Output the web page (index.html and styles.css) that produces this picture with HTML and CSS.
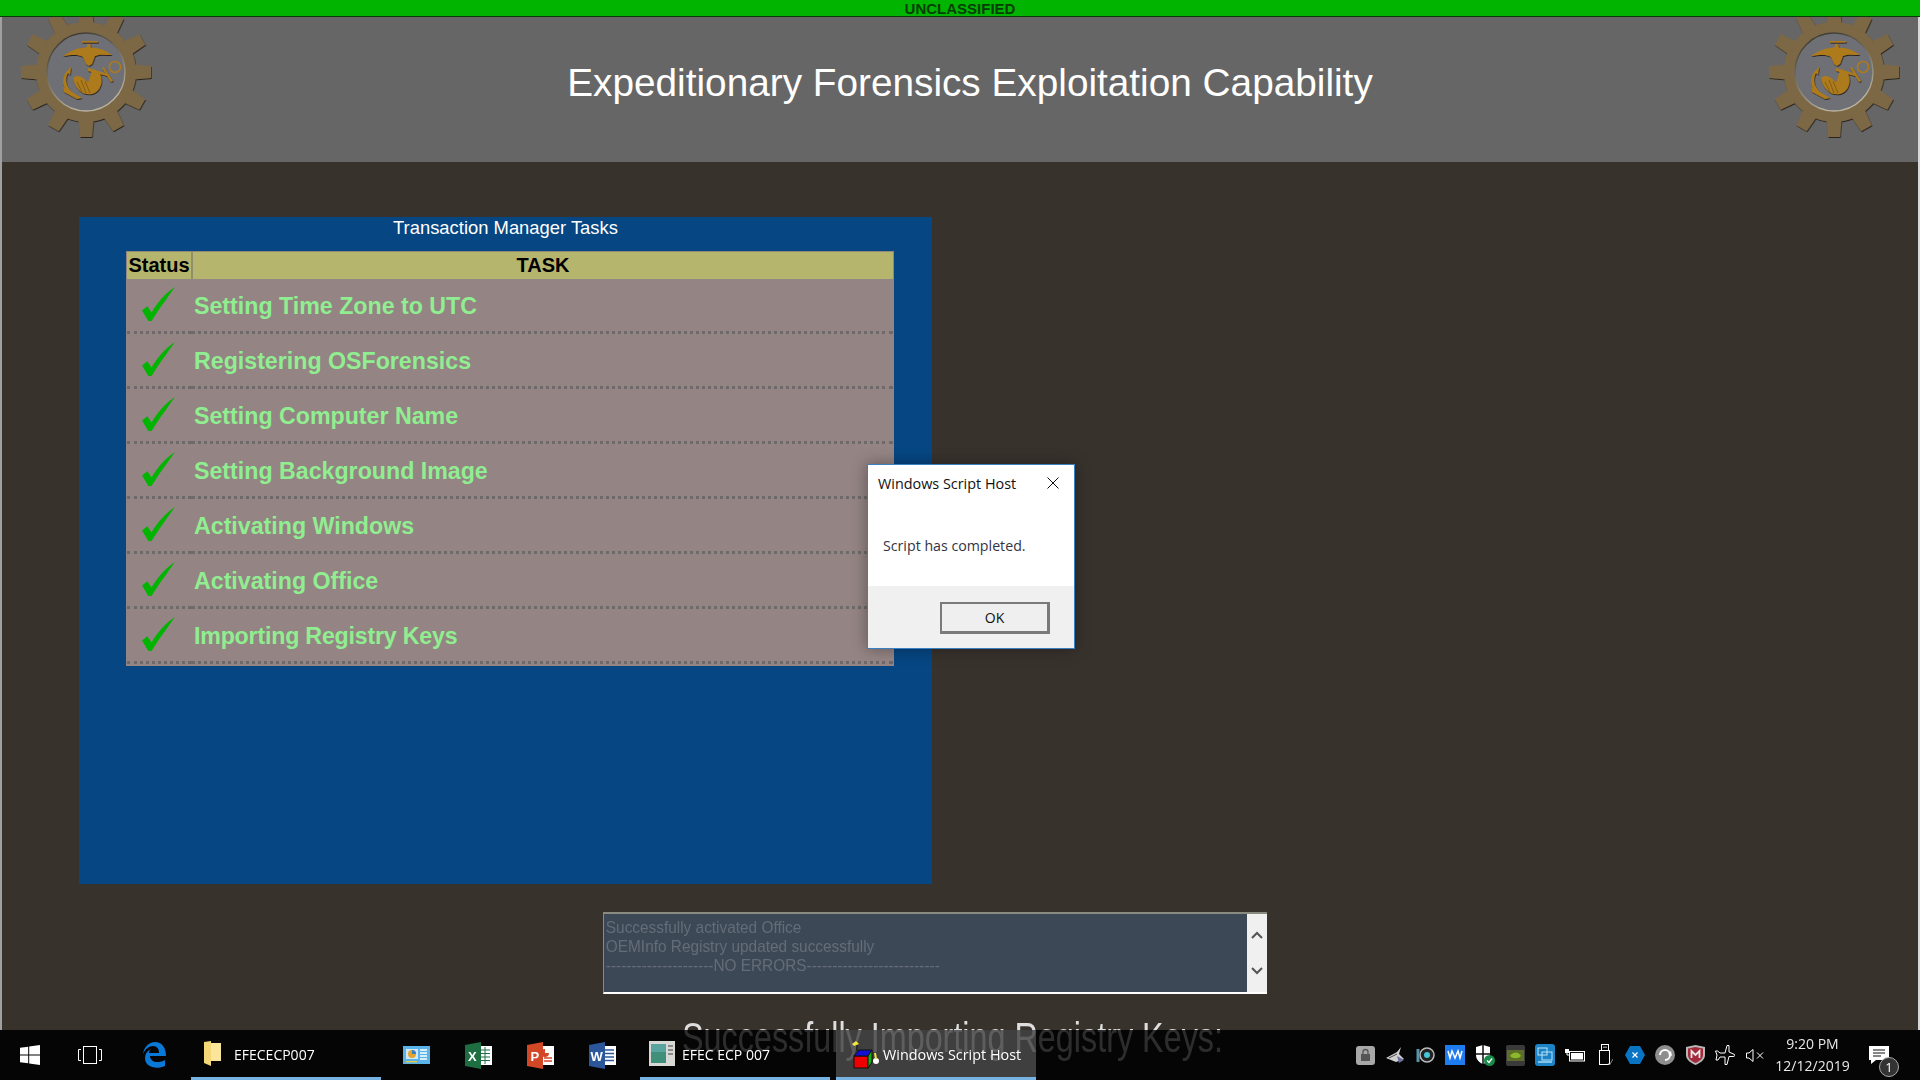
FILE: index.html
```html
<!DOCTYPE html>
<html>
<head>
<meta name="viewport" content="width=device-width, initial-scale=1.0">
<title>Expeditionary Forensics Exploitation Capability</title>
<link rel="stylesheet" href="styles.css">
</head>
<body>

<svg class="defs" width="0" height="0">
  <defs>
    <polygon id="tooth" points="-7.500,-48 -6,-65 6,-65 7.500,-48"/>
    <linearGradient id="ringedge" x1="0" y1="0" x2="0.4" y2="1">
      <stop offset="0" stop-color="#2e2a22"/>
      <stop offset="1" stop-color="#b8b2a0"/>
    </linearGradient>
    <filter id="bevel" x="-10%" y="-10%" width="120%" height="120%">
      <feDropShadow dx="0.6" dy="1" stdDeviation="0.4" flood-color="#26221a"/>
    </filter>
    <g id="gear">
      <g fill="#7c6744" filter="url(#bevel)">
        <circle cx="0" cy="0" r="44.500" fill="none" stroke="#7c6744" stroke-width="11"/>
        <use href="#tooth"/>
        <use href="#tooth" transform="rotate(30)"/>
        <use href="#tooth" transform="rotate(60)"/>
        <use href="#tooth" transform="rotate(90)"/>
        <use href="#tooth" transform="rotate(120)"/>
        <use href="#tooth" transform="rotate(150)"/>
        <use href="#tooth" transform="rotate(180)"/>
        <use href="#tooth" transform="rotate(210)"/>
        <use href="#tooth" transform="rotate(240)"/>
        <use href="#tooth" transform="rotate(270)"/>
        <use href="#tooth" transform="rotate(300)"/>
        <use href="#tooth" transform="rotate(330)"/>
      </g>
      <circle cx="0" cy="0" r="39" fill="#6e7076" stroke="url(#ringedge)" stroke-width="1.400"/>
      <g fill="#ad7a1c" filter="url(#bevel)">
        <!-- eagle -->
        <rect x="-4" y="-31" width="16" height="1.600"/>
        <path d="M-23,-16 C-16,-21 -9,-24 -3,-24 L1,-25 L1,-28 L4,-28 L5,-24 C11,-25 19,-22 26,-17 C20,-17 14,-18 9,-16 L6,-8 L3,-6 L0,-8 L-3,-15 C-8,-18 -15,-17 -23,-16 Z"/>
        <!-- globe -->
        <path d="M-13,6 C-8,1 -2,6 2,10 C5,6 4,-1 8,-3 L14,2 C18,10 14,20 6,22 C-3,24 -11,17 -13,6 Z"/>
        <!-- anchor -->
        <path d="M2,-4 L22,2 L21,4 L2,-1 Z"/>
        <path d="M16,-4 L18,-5 L27,9 L25,10 Z"/>
        <path d="M-22,2 L-15,-5 L-16,3 L-18,1 C-23,10 -18,20 -6,25 L-8,26 C-21,22 -27,11 -20,0 Z"/>
        <path d="M-23,15 L-4,26 L-9,27 L-22,20 Z"/>
      </g>
      <path d="M-9,10 L-4,20 M-5,8 L0,21 M-1,9 L4,21" stroke="#7a5510" stroke-width="0.800" fill="none"/>
      <circle cx="29" cy="-5" r="5.500" fill="none" stroke="#ad7a1c" stroke-width="1.500"/>
    </g>
    <path id="check" d="M0,22 L5,18 L9,24 C14,15 22,6 31,0 C24,10 15,22 9,32 L6,32 Z"/>
  </defs>
</svg>

<div class="banner">UNCLASSIFIED</div>

<div class="app">
  <header class="header">
    <svg class="gear" viewBox="-70 -55 140 125"><use href="#gear"/></svg>
    <h1 class="title">Expeditionary Forensics Exploitation Capability</h1>
    <svg class="gear" viewBox="-70 -55 140 125"><use href="#gear"/></svg>
  </header>

  <main class="main">
    <section class="panel">
      <div class="panel-title">Transaction Manager Tasks</div>
      <table class="tasks">
        <thead>
          <tr><th class="col-status">Status</th><th>TASK</th></tr>
        </thead>
        <tbody>
          <tr><td class="col-status"><svg class="tick" viewBox="0 0 32 32"><use href="#check"/></svg></td><td>Setting Time Zone to UTC</td></tr>
          <tr><td class="col-status"><svg class="tick" viewBox="0 0 32 32"><use href="#check"/></svg></td><td>Registering OSForensics</td></tr>
          <tr><td class="col-status"><svg class="tick" viewBox="0 0 32 32"><use href="#check"/></svg></td><td>Setting Computer Name</td></tr>
          <tr><td class="col-status"><svg class="tick" viewBox="0 0 32 32"><use href="#check"/></svg></td><td>Setting Background Image</td></tr>
          <tr><td class="col-status"><svg class="tick" viewBox="0 0 32 32"><use href="#check"/></svg></td><td>Activating Windows</td></tr>
          <tr><td class="col-status"><svg class="tick" viewBox="0 0 32 32"><use href="#check"/></svg></td><td>Activating Office</td></tr>
          <tr><td class="col-status"><svg class="tick" viewBox="0 0 32 32"><use href="#check"/></svg></td><td class="task-narrow">Importing Registry Keys</td></tr>
        </tbody>
      </table>
    </section>

    <div class="log">
      <div class="log-text">Successfully activated Office<br>OEMInfo Registry updated successfully<br>---------------------NO ERRORS--------------------------</div>
      <div class="log-scroll">
        <svg width="12" height="8" viewBox="0 0 12 8"><path d="M1,7 L6,2 L11,7" fill="none" stroke="#555" stroke-width="2"/></svg>
        <svg width="12" height="8" viewBox="0 0 12 8"><path d="M1,1 L6,6 L11,1" fill="none" stroke="#555" stroke-width="2"/></svg>
      </div>
    </div>

    <div class="status-line">Successfully Importing Registry Keys:</div>
  </main>
</div>

<div class="dialog">
  <div class="dialog-head">
    <span>Windows Script Host</span>
    <svg width="12" height="12" viewBox="0 0 12 12"><path d="M0.5,0.5 L11.5,11.5 M11.5,0.5 L0.5,11.5" stroke="#111" stroke-width="1"/></svg>
  </div>
  <div class="dialog-body">Script has completed.</div>
  <div class="dialog-foot"><button class="dialog-btn" type="button">OK</button></div>
</div>

<footer class="taskbar">
  <div class="tb-icon">
    <svg width="20" height="20" viewBox="0 0 20 20" fill="#fff"><path d="M0,2.8 L8.2,1.7 V9.4 H0 Z M9.2,1.5 L20,0 V9.4 H9.2 Z M0,10.4 H8.2 V18.3 L0,17.2 Z M9.2,10.4 H20 V20 L9.2,18.5 Z"/></svg>
  </div>
  <div class="tb-icon">
    <svg width="24" height="18" viewBox="0 0 24 18" fill="none" stroke="#fff"><rect x="5.5" y="0.5" width="13" height="17"/><path d="M3,3.5 H0.5 V14.5 H3 M21,3.5 H23.5 V14.5 H21"/></svg>
  </div>
  <div class="tb-icon tb-edge">
    <svg width="24" height="26" viewBox="0 0 24 26"><path d="M1,12 C2,4 8,0 13,0 C20,0 24,6 24,14 H8 C8,20 16,22 23,18 V24 C14,28 3,25 3,16 C3,12 5,9 9,7 C7,9 7,10 7,11 H17 C17,7 15,4 11,4 C7,4 3,7 1,12 Z" fill="#0a78d7"/></svg>
  </div>
  <div class="tb-task">
    <svg width="18" height="26" viewBox="0 0 18 26"><path d="M0,1 L7,0 V2 H17 V20 H7 V25 L0,22 Z" fill="#f6d777"/><path d="M7,2 H17 V20 H7 Z" fill="#fbe59a"/></svg>
    <span class="tb-label">EFECECP007</span>
  </div>
  <div class="tb-pinned">
    <svg width="27" height="18" viewBox="0 0 27 18"><rect width="27" height="18" fill="#5ab4ea"/><rect x="3" y="3" width="12" height="10" fill="#cfe9f8"/><circle cx="9" cy="8" r="4" fill="#e6a42e"/><path d="M9,8 V4 A4,4 0 0 1 13,8 Z" fill="#3b7fc0"/><path d="M17,4 H24 M17,7 H24 M17,10 H24 M17,13 H24" stroke="#fff" stroke-width="1.4"/><rect x="3" y="15" width="11" height="1.4" fill="#e6c84a"/></svg>
  </div>
  <div class="tb-pinned">
    <svg width="27" height="27" viewBox="0 0 27 27"><rect x="13" y="4" width="14" height="19" fill="#fff"/><path d="M16,8 H25 M16,11.500 H25 M16,15 H25 M16,18.500 H25 M20,5 V22" stroke="#1d6f42" stroke-width="1"/><path d="M0,3 L16,0 V27 L0,24 Z" fill="#1d6f42"/><text class="tb-letter" x="3" y="19">X</text></svg>
  </div>
  <div class="tb-pinned">
    <svg width="27" height="27" viewBox="0 0 27 27"><rect x="13" y="4" width="14" height="19" fill="#fff"/><path d="M18,7 A4,4 0 1 0 22,11 H18 Z" fill="#d24726"/><path d="M17,16 H25 M17,19 H25" stroke="#d24726" stroke-width="1.400"/><path d="M0,3 L16,0 V27 L0,24 Z" fill="#d24726"/><text class="tb-letter" x="3.500" y="19">P</text></svg>
  </div>
  <div class="tb-pinned">
    <svg width="27" height="27" viewBox="0 0 27 27"><rect x="13" y="4" width="14" height="19" fill="#fff"/><path d="M16,8 H25 M16,11.500 H25 M16,15 H25 M16,18.500 H25" stroke="#2b579a" stroke-width="1.400"/><path d="M0,3 L16,0 V27 L0,24 Z" fill="#2b579a"/><text class="tb-letter" x="1.500" y="19">W</text></svg>
  </div>
  <div class="tb-task tb-task-ecp">
    <svg width="26" height="25" viewBox="0 0 26 25"><rect width="26" height="25" fill="#d8d8d4"/><rect x="2" y="3" width="15" height="19" fill="#3f8f7a"/><rect x="2" y="3" width="15" height="8" fill="#5aa4a0"/><path d="M19,5 H24 M19,9 H24 M19,13 H24" stroke="#8a8a8a" stroke-width="2"/></svg>
    <span class="tb-label">EFEC ECP 007</span>
  </div>
  <div class="tb-task tb-task-active">
    <svg width="28" height="30" viewBox="0 0 28 30"><path d="M1,5 L3,7 L8,5 L5,2 Z" fill="#f5e63c"/><path d="M6,6 V12" stroke="#111"/><rect x="3" y="17" width="14" height="12" fill="#ee0000" stroke="#111"/><path d="M3,17 L8,11 H21 L17,17 Z" fill="#1010d0" stroke="#111"/><path d="M17,17 L21,11 V23 L17,29 Z" fill="#12b012" stroke="#111"/><circle cx="25" cy="22" r="3" fill="#fff"/><path d="M24,14 L25,20" stroke="#f5e63c" stroke-width="2"/></svg>
    <span class="tb-label">Windows Script Host</span>
  </div>

  <div class="tray">
    <div class="tray-icon"><svg width="19" height="19" viewBox="0 0 19 19"><rect width="19" height="19" rx="3" fill="#a8a8a8"/><rect x="5" y="8" width="9" height="7" fill="#555"/><path d="M7,8 V6 A2.500,2.500 0 0 1 12,6 V8" fill="none" stroke="#555" stroke-width="1.300"/></svg></div>
    <div class="tray-icon"><svg width="19" height="17" viewBox="0 0 19 17"><path d="M0,11 L11,5 L15,0 L13,7 L18,12 L10,15 Z" fill="#d0d0d0"/><path d="M11,9 L18,13 L13,16 Z" fill="#6a6f9e"/><path d="M3,11 L11,7" stroke="#444"/></svg></div>
    <div class="tray-icon"><svg width="19" height="19" viewBox="0 0 19 19"><circle cx="11" cy="9" r="7" fill="#222" stroke="#bbb" stroke-width="1.500"/><circle cx="11" cy="9" r="3" fill="#46c4d8"/><path d="M2,3 V16" stroke="#5b93a8" stroke-width="3"/></svg></div>
    <div class="tray-icon"><svg width="20" height="20" viewBox="0 0 20 20"><rect width="20" height="20" fill="#1e7cf0"/><path d="M3,6 L5,13 L7,6 L10,13 L13,6 L15,13 L17,6" fill="none" stroke="#fff" stroke-width="1.500"/></svg></div>
    <div class="tray-icon"><svg width="20" height="21" viewBox="0 0 20 21"><path d="M1,2 L8,0 L15,2 V10 C15,15 11,18 8,19 C5,18 1,15 1,10 Z" fill="#fff"/><path d="M8,0 V19 M1,9 H15" stroke="#111" stroke-width="1.500"/><circle cx="14.500" cy="15.500" r="5.500" fill="#1a8a4a"/><path d="M12,15.500 L14,17.500 L17,13.500" fill="none" stroke="#fff" stroke-width="1.300"/></svg></div>
    <div class="tray-icon"><svg width="19" height="21" viewBox="0 0 19 21"><rect width="19" height="21" rx="2" fill="#3a3a3a"/><rect x="1" y="5" width="17" height="11" fill="#5c6e28"/><path d="M4,11 C8,6 13,7 15,11 C12,14 7,14 4,11 Z" fill="#8cb82c"/></svg></div>
    <div class="tray-icon"><svg width="20" height="22" viewBox="0 0 20 22"><rect width="20" height="22" rx="3" fill="#1b83c6"/><rect x="3" y="4" width="9" height="7" fill="none" stroke="#bfe4f8"/><rect x="7" y="8" width="10" height="8" fill="none" stroke="#bfe4f8"/><rect x="3" y="17" width="14" height="2" fill="#7fc6ea"/></svg></div>
    <div class="tray-icon"><svg width="20" height="13" viewBox="0 0 20 13"><rect x="4.500" y="2.500" width="15" height="9.500" fill="#111" stroke="#fff"/><rect x="6" y="4" width="12" height="6.500" fill="#fff"/><rect x="0" y="0" width="4" height="4" fill="#fff"/><path d="M2,4 V6 H5" stroke="#fff" fill="none"/></svg></div>
    <div class="tray-icon"><svg width="15" height="22" viewBox="0 0 15 22" fill="none" stroke="#fff"><rect x="3.500" y="0.500" width="7" height="6"/><rect x="1.500" y="6.500" width="10" height="14"/><path d="M6,2.500 V4 M8,2.500 V4"/><path d="M10,19 L11.500,21 L15,15" stroke="#888"/></svg></div>
    <div class="tray-icon"><svg width="20" height="20" viewBox="0 0 20 20"><path d="M5,1 H15 L20,10 L15,19 H5 L0,10 Z" fill="#0a74c4"/><path d="M7.500,7.500 L12.500,12.500 M12.500,7.500 L7.500,12.500" stroke="#fff" stroke-width="1.200"/></svg></div>
    <div class="tray-icon"><svg width="20" height="20" viewBox="0 0 20 20"><circle cx="10" cy="10" r="10" fill="#8e8e8e"/><path d="M5,10 A5,5 0 1 1 10,15" fill="none" stroke="#fff" stroke-width="2"/><path d="M13,9 L17,11 L16,6 Z" fill="#fff"/></svg></div>
    <div class="tray-icon"><svg width="19" height="20" viewBox="0 0 19 20"><path d="M0,2 L9.500,0 L19,2 V10 C19,15 14,18 9.500,20 C5,18 0,15 0,10 Z" fill="#b8b8b8"/><path d="M2,3.500 L9.500,2 L17,3.500 V10 C17,14 13,16.500 9.500,18 C6,16.500 2,14 2,10 Z" fill="#a22a3a"/><path d="M5.500,13 V6 L9.500,10 L13.500,6 V13" fill="none" stroke="#e8e8e8" stroke-width="1.800"/></svg></div>
    <div class="tray-icon"><svg width="20" height="20" viewBox="0 0 20 20"><path d="M12,0.500 L14,0.500 L14,7 L19.500,9.500 C20,11 19.500,11.500 18,11.500 L14,11.500 L12,19.500 H10 L10,12 L5,12 L3,15 H1 L2,10 L0.500,6 H2.500 L5,8 L10,8 Z" fill="#080808" stroke="#fff" stroke-width="1"/></svg></div>
    <div class="tray-icon"><svg width="19" height="13" viewBox="0 0 19 13" fill="none" stroke="#fff"><path d="M0.500,4 H3 L7,0.500 V12.500 L3,9 H0.500 Z"/><path d="M11,3.500 L17,9.500 M17,3.500 L11,9.500"/></svg></div>
  </div>
  <div class="clock"><span>9:20 PM</span><span>12/12/2019</span></div>
  <div class="notify">
    <svg width="20" height="18" viewBox="0 0 20 18"><path d="M0,0 H20 V14 H7 L2,18 V14 H0 Z" fill="#fff"/><path d="M4,4 H16 M4,7 H16 M4,10 H12" stroke="#111"/></svg>
    <span class="notify-count">1</span>
  </div>
</footer>

</body>
</html>
```

FILE: styles.css
```css
html, body {
  margin: 0;
  height: 100%;
}

body {
  font-family: "Liberation Sans", Arial, sans-serif;
  background-color: #1a1a1a;
  height: 100vh;
  overflow: hidden;
}

.defs {
  position: absolute;
}

.banner {
  height: 16px;
  line-height: 17px;
  background-color: #00b400;
  border-bottom: 1px solid #0a3a0a;
  color: #063f06;
  font-size: 15px;
  font-weight: bold;
  text-align: center;
}

.app {
  height: 1013px;
  background-color: #38322d;
  border-left: 2px solid #a0a0a0;
  border-right: 2px solid #d8d8d8;
}

.header {
  display: flex;
  align-items: flex-start;
  justify-content: space-between;
  height: 145px;
  background-color: #666666;
  padding: 0 14px;
  box-sizing: border-box;
}

.gear {
  width: 140px;
  height: 125px;
  display: block;
}

.title {
  margin: 43px 0 0 20px;
  font-size: 38.75px;
  font-weight: normal;
  line-height: 46px;
  color: #ffffff;
}

.main {
  padding: 55px 0 0 77px;
}

.panel {
  width: 853px;
  height: 667px;
  background-color: #064682;
  box-sizing: border-box;
  padding: 0 38px 0 47px;
}

.panel-title {
  height: 34px;
  margin: 0 -38px 0 -47px;
  line-height: 22px;
  text-align: center;
  color: #ffffff;
  font-size: 18.4px;
}

.tasks {
  width: 768px;
  border-collapse: separate;
  border-spacing: 0;
  background-color: #948484;
  border: 1px solid #948484;
  border-top: 1px solid #8f8b77;
  border-bottom-width: 2px;
}

.tasks th {
  height: 27px;
  padding: 0;
  background-color: #b5b56e;
  color: #000000;
  font-size: 20px;
  font-weight: bold;
  border-left: 2px solid #8f8f68;
}

.tasks th.col-status {
  width: 64px;
  border-left: 0;
}

.tasks td {
  height: 55px;
  padding: 2px 0 0 3px;
  box-sizing: border-box;
  color: #90ee90;
  font-size: 23.2px;
  font-weight: bold;
  border-bottom: 3px dotted #6f6a6a;
}

.tasks td.col-status {
  padding: 0;
}

.tasks td.task-narrow {
  letter-spacing: -0.2px;
}

.tick {
  width: 34px;
  height: 34px;
  display: block;
  margin: -2px 0 0 15px;
  fill: #00b400;
}

.log {
  display: flex;
  width: 664px;
  height: 82px;
  margin: 28px 0 0 524px;
  background-color: #3d4856;
  border-top: 2px solid #8a8a80;
  border-left: 1px solid #8a8a80;
  border-bottom: 2px solid #ffffff;
  box-sizing: border-box;
}

.log-text {
  flex: 1;
  padding: 4px 0 0 2px;
  font-size: 17px;
  line-height: 19px;
  color: #646c78;
  white-space: nowrap;
  transform: scaleX(0.905);
  transform-origin: left top;
}

.log-scroll {
  width: 20px;
  background-color: #f0f0f0;
  display: flex;
  flex-direction: column;
  align-items: center;
  justify-content: center;
  gap: 28px;
}

.status-line {
  margin: 20px 0 0 603px;
  font-size: 42px;
  line-height: 48px;
  color: #dedede;
  white-space: nowrap;
  transform: scaleX(0.77);
  transform-origin: left top;
}

/* dialog sits over the page */
.dialog {
  position: absolute;
  left: 867px;
  top: 464px;
  width: 208px;
  height: 185px;
  background-color: #ffffff;
  border: 1px solid #3a80c0;
  box-sizing: border-box;
  box-shadow: 0 0 14px rgba(0, 0, 0, 0.35);
  display: flex;
  flex-direction: column;
  font-family: "Open Sans", sans-serif;
  color: #111111;
}

.dialog-head {
  display: flex;
  justify-content: space-between;
  align-items: center;
  height: 36px;
  padding: 0 15px 2px 10px;
  font-size: 14.4px;
}

.dialog-body {
  flex: 1;
  padding: 34px 0 0 15px;
  font-size: 14.2px;
  line-height: 18px;
  color: #333344;
}

.dialog-foot {
  height: 62px;
  background-color: #f0f0f0;
  padding: 16px 0 0 72px;
  box-sizing: border-box;
}

.dialog-btn {
  width: 110px;
  height: 32px;
  background-color: #efefef;
  border: 2px solid #7a7a7a;
  border-bottom-width: 3px;
  border-right-width: 3px;
  font-family: "Open Sans", sans-serif;
  font-size: 14px;
  color: #111111;
  padding: 0;
}

/* translucent, the line of text under it shows through */
.taskbar {
  position: fixed;
  left: 0;
  right: 0;
  bottom: 0;
  height: 50px;
  background-color: rgba(0, 0, 0, 0.8);
  display: flex;
  align-items: stretch;
  color: #ffffff;
  font-family: "Open Sans", sans-serif;
  font-size: 14px;
}

.tb-icon {
  width: 60px;
  display: flex;
  align-items: center;
  justify-content: center;
}

.tb-edge {
  margin-left: 4px;
}

.tb-task {
  width: 190px;
  margin-left: 7px;
  padding: 0 0 0 13px;
  box-sizing: border-box;
  display: flex;
  align-items: center;
  gap: 12px;
  border-bottom: 3px solid #76b2e2;
}

.tb-label {
  margin-top: 2px;
  white-space: nowrap;
}

.tb-pinned {
  width: 62px;
  display: flex;
  align-items: center;
  justify-content: center;
}

.tb-pinned:nth-of-type(5) {
  margin-left: 4px;
}

.tb-letter {
  font-family: "Liberation Sans", sans-serif;
  font-size: 13px;
  font-weight: bold;
  fill: #ffffff;
}

.tb-task-ecp {
  padding-left: 9px;
  gap: 7px;
}

.tb-task-active {
  width: 200px;
  margin-left: 6px;
  padding-left: 15px;
  gap: 4px;
  background-color: rgba(255, 255, 255, 0.23);
}

.tb-task-active .tb-label {
  font-size: 14.4px;
}

.tray {
  display: flex;
  margin-left: 314px;
}

.tray-icon {
  width: 30px;
  display: flex;
  align-items: center;
  justify-content: center;
}

.clock {
  width: 85px;
  display: flex;
  flex-direction: column;
  align-items: center;
  justify-content: center;
  gap: 4px;
  font-size: 14px;
  line-height: 18px;
  color: #e8e8e8;
}

.notify {
  position: relative;
  width: 65px;
  display: flex;
  align-items: center;
  padding-left: 14px;
  box-sizing: border-box;
}

.notify-count {
  position: absolute;
  left: 24px;
  top: 27px;
  width: 20px;
  height: 20px;
  line-height: 19px;
  text-align: center;
  background-color: #333333;
  border: 1px solid #aaaaaa;
  border-radius: 50%;
  box-sizing: border-box;
  font-size: 13px;
}
```
